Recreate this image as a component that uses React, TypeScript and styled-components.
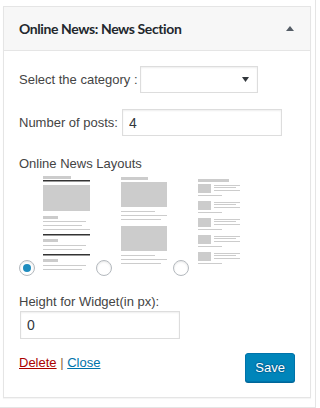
import * as React from "react";
import styled, { createGlobalStyle } from "styled-components";

const GlobalStyle = createGlobalStyle`
  html, body {
    margin: 0;
    padding: 0;
    background: #fff;
  }
  body {
    font-family: "Liberation Sans", Arial, sans-serif;
    font-size: 13px;
    color: #444;
  }
`;

const Page = styled.div`
  width: 316px;
  height: 408px;
  box-sizing: border-box;
  padding: 6px 0 0 3px;
  border-right: 1px solid #e5e5e5;
  border-bottom: 1px solid #e5e5e5;
`;

const Widget = styled.div`
  width: 308px;
  box-sizing: border-box;
  border: 1px solid #e5e5e5;
  box-shadow: 0 1px 1px rgba(0, 0, 0, 0.04);
  background: #fff;
`;

const WidgetTop = styled.div`
  height: 43px;
  display: flex;
  align-items: center;
  justify-content: space-between;
  padding: 0 16px 0 15px;
  background: #f7f7f7;
  border-bottom: 1px solid #e5e5e5;
`;

const Title = styled.h3`
  margin: 0;
  font-family: Lato, "Liberation Sans", sans-serif;
  font-size: 14px;
  font-weight: 700;
  letter-spacing: -0.4px;
  color: #23282d;
`;

const WidgetInside = styled.div`
  padding: 15px 15px 15px;
  display: flex;
  flex-direction: column;
`;

type TRow = {
  top?: number;
  gap?: number;
};

const Row = styled.div<TRow>`
  display: flex;
  align-items: center;
  gap: ${props => (props.gap === undefined ? 4 : props.gap)}px;
  margin-top: ${props => props.top || 0}px;
`;

const Label = styled.label<TRow>`
  display: block;
  line-height: 18px;
  margin-top: ${props => props.top || 0}px;
`;

const FakeSelect = styled.div`
  width: 118px;
  height: 27px;
  box-sizing: border-box;
  border: 1px solid #ddd;
  box-shadow: inset 0 1px 2px rgba(0, 0, 0, 0.07);
  background: #fff;
  display: flex;
  align-items: center;
  justify-content: flex-end;
  padding-right: 8px;
`;

const TextInput = styled.input<{ w: number; h: number; left?: number }>`
  width: ${props => props.w}px;
  height: ${props => props.h}px;
  box-sizing: border-box;
  margin: 0 0 0 ${props => props.left || 0}px;
  padding: 0 6px;
  border: 1px solid #ddd;
  box-shadow: inset 0 1px 2px rgba(0, 0, 0, 0.07);
  font-family: "Liberation Sans", Arial, sans-serif;
  font-size: 14px;
  color: #32373c;
  outline: none;
  background: #fff;
`;

const Layouts = styled.div`
  display: flex;
  gap: 6px;
  margin-top: 1px;
`;

const LayoutOption = styled.div`
  display: flex;
  align-items: flex-end;
  gap: 8px;
`;

const Radio = styled.span<{ checked?: boolean }>`
  width: 16px;
  height: 16px;
  box-sizing: border-box;
  border-radius: 50%;
  border: 1px solid #b4b9be;
  background: #fff;
  box-shadow: inset 0 1px 2px rgba(0, 0, 0, 0.1);
  display: flex;
  align-items: center;
  justify-content: center;

  &::before {
    content: "";
    width: 8px;
    height: 8px;
    border-radius: 50%;
    background: #1e8cbe;
    display: ${props => (props.checked ? "block" : "none")};
  }
`;

const Footer = styled.div`
  display: flex;
  justify-content: space-between;
  align-items: flex-start;
  margin-top: 14px;
`;

const Links = styled.div`
  line-height: 18px;
  padding-top: 1px;
`;

const Link = styled.a<{ danger?: boolean }>`
  color: ${props => (props.danger ? "#a00" : "#0073aa")};
  text-decoration: underline;
`;

const Pipe = styled.span`
  color: #8b6a3e;
`;

const SaveButton = styled.button`
  height: 29px;
  padding: 0 9px;
  box-sizing: border-box;
  font-family: "Liberation Sans", Arial, sans-serif;
  font-size: 13px;
  color: #fff;
  background: #0085ba;
  border: 1px solid #0073aa;
  border-radius: 3px;
  box-shadow: 0 1px 0 #006799;
  text-shadow: 0 -1px 1px #006799, 1px 0 1px #006799, 0 1px 1px #006799,
    -1px 0 1px #006799;
`;

const G = "#cccccc";
const D = "#333333";

const LayoutOne = () => (
  <svg width="47" height="102" viewBox="0 0 47 102">
    <rect x="0" y="2" width="28" height="3" fill={G} />
    <rect x="0" y="6" width="47" height="1.5" fill={D} />
    <rect x="0" y="11" width="47" height="26" fill={G} />
    <rect x="0" y="42" width="15" height="3" fill={G} />
    <rect x="0" y="47" width="43" height="1" fill={G} />
    <rect x="0" y="51" width="39" height="1" fill={G} />
    <rect x="0" y="55" width="47" height="1" fill={G} />
    <rect x="0" y="60" width="47" height="1.5" fill={D} />
    <rect x="0" y="65" width="15" height="3" fill={G} />
    <rect x="0" y="71" width="43" height="1" fill={G} />
    <rect x="0" y="75" width="39" height="1" fill={G} />
    <rect x="0" y="80" width="47" height="1.5" fill={D} />
    <rect x="0" y="85" width="15" height="3" fill={G} />
    <rect x="0" y="91" width="43" height="1" fill={G} />
    <rect x="0" y="95" width="39" height="1" fill={G} />
  </svg>
);

const LayoutTwo = () => (
  <svg width="47" height="102" viewBox="0 0 47 102">
    <rect x="1" y="3" width="27" height="3" fill={G} />
    <rect x="1" y="8" width="46" height="25" fill={G} />
    <rect x="1" y="37" width="34" height="1" fill={G} />
    <rect x="1" y="41" width="46" height="1" fill={G} />
    <rect x="1" y="45" width="40" height="1" fill={G} />
    <rect x="1" y="52" width="46" height="25" fill={G} />
    <rect x="1" y="81" width="34" height="1" fill={G} />
    <rect x="1" y="85" width="46" height="1" fill={G} />
    <rect x="1" y="89" width="40" height="1" fill={G} />
  </svg>
);

const LayoutThree = () => (
  <svg width="47" height="102" viewBox="0 0 47 102">
    <rect x="1" y="5" width="31" height="3" fill={G} />
    {[0, 1, 2, 3, 4].map(i => (
      <g key={i} transform={`translate(1 ${10 + i * 17})`}>
        <rect x="0" y="0" width="13" height="9" fill={G} />
        <rect x="16" y="1" width="26" height="1" fill={G} />
        <rect x="16" y="3" width="22" height="1" fill={G} />
        <rect x="16" y="6" width="26" height="1" fill={G} />
        <rect x="0" y="11" width="24" height="1" fill={G} />
      </g>
    ))}
  </svg>
);

const App = () => {
  return (
    <Page>
      <GlobalStyle />
      <Widget>
        <WidgetTop>
          <Title>Online News: News Section</Title>
          <svg width="8" height="5" viewBox="0 0 8 5">
            <path d="M0 5 L4 0 L8 5 Z" fill="#555d66" />
          </svg>
        </WidgetTop>
        <WidgetInside>
          <Row gap={2}>
            <span>Select the category :</span>
            <FakeSelect>
              <svg width="7" height="5" viewBox="0 0 7 5">
                <path d="M0 0 L7 0 L3.5 5 Z" fill="#32373c" />
              </svg>
            </FakeSelect>
          </Row>
          <Row top={16}>
            <span>Number of posts:</span>
            <TextInput w={160} h={27} defaultValue="4" readOnly />
          </Row>
          <Label top={19}>Online News Layouts</Label>
          <Layouts>
            <LayoutOption>
              <Radio checked />
              <LayoutOne />
            </LayoutOption>
            <LayoutOption>
              <Radio />
              <LayoutTwo />
            </LayoutOption>
            <LayoutOption>
              <Radio />
              <LayoutThree />
            </LayoutOption>
          </Layouts>
          <Label top={17}>Height for Widget(in px):</Label>
          <TextInput w={160} h={28} left={1} defaultValue="0" readOnly />
          <Footer>
            <Links>
              <Link danger href="#">Delete</Link> <Pipe>|</Pipe>{" "}
              <Link href="#">Close</Link>
            </Links>
            <SaveButton>Save</SaveButton>
          </Footer>
        </WidgetInside>
      </Widget>
    </Page>
  );
};

export default App;
